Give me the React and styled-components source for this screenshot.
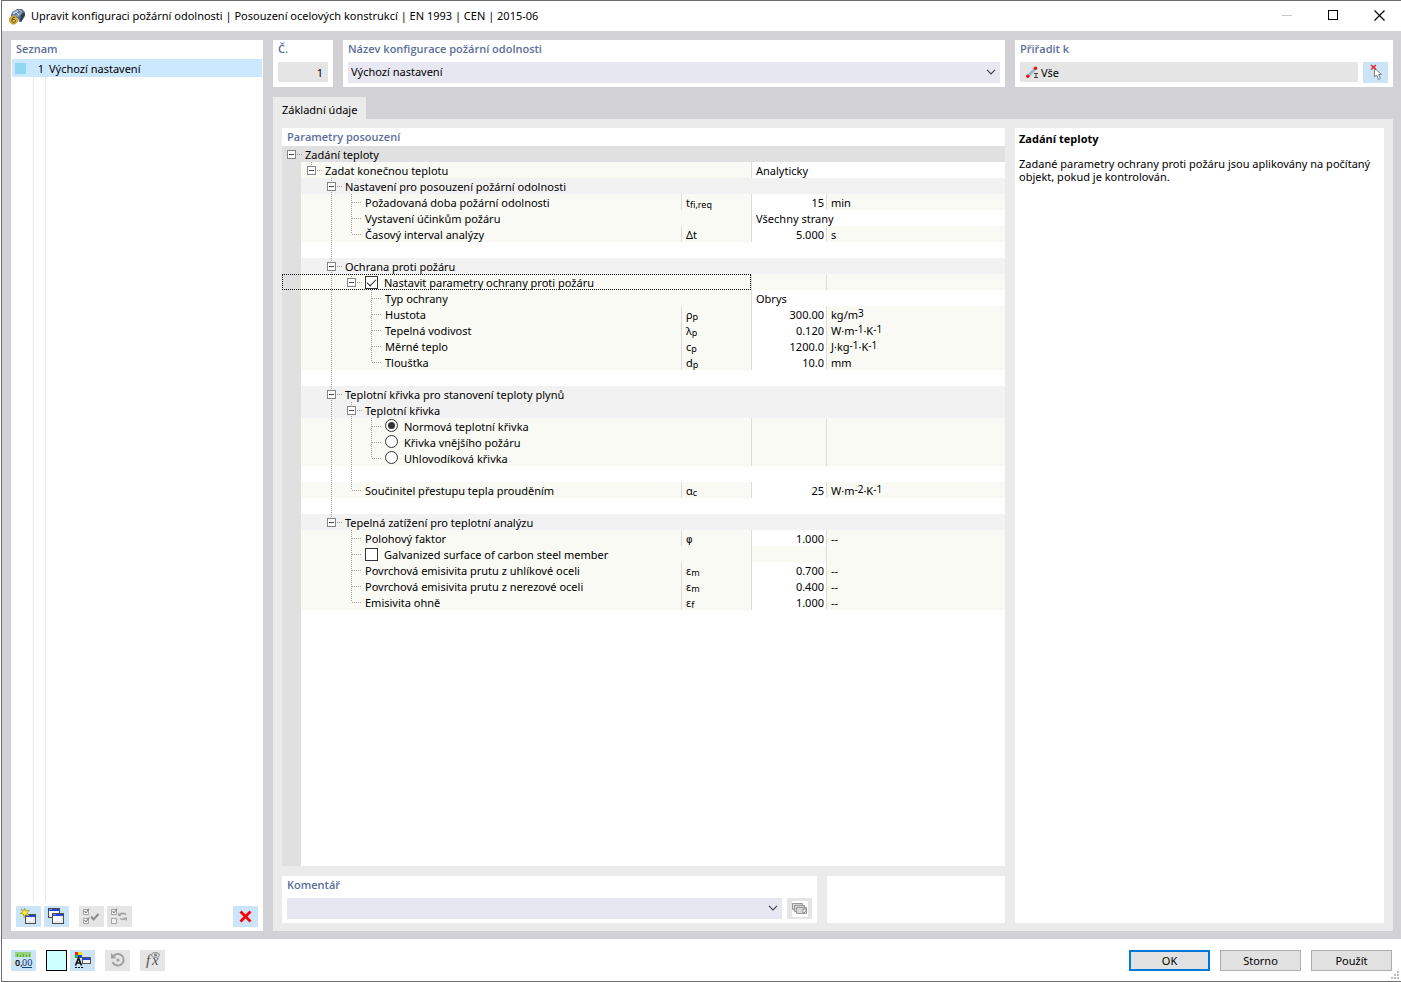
import React, { useState } from 'react'
import styled, { createGlobalStyle } from 'styled-components'

const GlobalStyle = createGlobalStyle`
	* {
		box-sizing: border-box;
	}

	body {
		margin: 0;
		color: #000;
		font-family: "Noto Sans", "Open Sans", sans-serif;
		font-size: 11px;
		line-height: 16px;
	}

	input, select, button {
		margin: 0;
		color: inherit;
		font: inherit;
	}
`;

const Dialog = styled.div`
	display: flex;
	flex-direction: column;
	min-height: 100vh;
	margin-left: 1px;
	border: solid #6d6d6d;
	border-width: 1px 0 1px 1px;
	background: #fff;
`;

const TitleBar = styled.header`
	display: flex;
	align-items: center;
	height: 30px;
	padding-left: 7px;
`;

const TitleText = styled.h1`
	flex: 1;
	margin: 0 0 0 5px;
	font-size: 11px;
	font-weight: normal;
	white-space: nowrap;
`;

const WindowButton = styled.button`
	display: flex;
	align-items: center;
	justify-content: center;
	width: 46px;
	height: 30px;
	padding: 0 0 2px 2px;
	border: 0;
	background: none;
`;

const Body = styled.main`
	display: flex;
	flex: 1;
	gap: 10px;
	padding: 9px 8px 8px 9px;
	background: #d2d1d6;
`;

const Panel = styled.section`
	display: flex;
	flex-direction: column;
	padding: ${({ $flush }) => ($flush ? '0' : '0 5px 4px')};
	flex: ${({ $flex }) => $flex || 'none'};
	width: ${({ $width }) => $width || 'auto'};
	min-width: 0;
	background: #fff;
`;

const Caption = styled.label`
	display: block;
	height: ${({ $compact }) => ($compact ? '18px' : '22px')};
	padding-left: ${({ $compact }) => ($compact ? '5px' : '0')};
	color: #5b6e99;
	font-family: "Open Sans", "Noto Sans", sans-serif;
	font-weight: 600;
	line-height: 18px;
`;

const ListRow = styled.div`
	display: grid;
	grid-template-columns: 22px 10px 1fr;
	align-items: center;
	height: 18px;
	background: #cce8ff;
`;

const ListGrid = styled.div`
	flex: 1;
	margin: 1px 1px 5px;
	background:
		linear-gradient(#e6e6e6, #e6e6e6) 21px 0 / 1px 100% no-repeat,
		linear-gradient(#e6e6e6, #e6e6e6) 33px 0 / 1px 100% no-repeat;
`;

const Swatch = styled.span`
	width: 11px;
	height: 11px;
	margin-left: 3px;
	background: #8fd7f3;
`;

const ListNumber = styled.span`
	padding-top: 2px;
	text-align: right;
`;

const ListName = styled.span`
	padding: 2px 0 0 5px;
`;

const Toolbar = styled.div`
	display: flex;
	gap: ${({ $gap }) => $gap || '3px'};
	margin-right: ${({ $push }) => ($push ? 'auto' : '0')};
`;

const ListFooter = styled.div`
	display: flex;
	gap: 10px;
	padding: 0 5px 4px;
`;

const IconButton = styled.button`
	display: flex;
	align-items: center;
	justify-content: center;
	flex: none;
	width: 25px;
	height: 21px;
	padding: 0;
	border: 0;
	background: ${({ disabled }) => (disabled ? '#e5e5e5' : '#cce4f7')};
`;

const ColorButton = styled(IconButton)`
	width: 21px;
	border: 1px solid #000;
	background: #ccffff;
`;

const Main = styled.div`
	display: flex;
	flex: 1;
	flex-direction: column;
	min-width: 0;
`;

const TopRow = styled.div`
	display: flex;
	gap: 10px;
	height: 47px;
`;

const Fields = styled.div`
	display: flex;
	gap: 5px;
`;

const NumberInput = styled.input`
	width: 50px;
	height: 20px;
	padding: 0 5px;
	border: 0;
	background: #e5e5e5;
	text-align: right;
`;

const SelectWrap = styled.div`
	position: relative;
	display: flex;
	flex: 1;
	height: 21px;
	background: #e7e7f2;

	svg {
		position: absolute;
		top: 7px;
		right: 4px;
		pointer-events: none;
	}
`;

const Select = styled.select`
	width: 100%;
	height: 20px;
	padding: 0 20px 0 3px;
	border: 0;
	background: none;
	appearance: none;
`;

const AssignField = styled.div`
	display: flex;
	align-items: center;
	flex: 1;
	height: 20px;
	padding-left: 6px;
	background: #e5e5e5;
`;

const AssignInput = styled.input`
	flex: 1;
	min-width: 0;
	padding: 2px 2px 0;
	border: 0;
	background: none;
`;

const Tab = styled.button`
	align-self: flex-start;
	height: 22px;
	margin-top: 10px;
	padding: 4px 9px 0;
	border: 0;
	background: #ebebeb;
	white-space: nowrap;
`;

const TabBody = styled.div`
	display: flex;
	flex: 1;
	gap: 10px;
	padding: 9px 9px 8px;
	background: #ebebeb;
`;

const Column = styled.div`
	display: flex;
	flex: 1;
	flex-direction: column;
	gap: 10px;
	min-width: 0;
`;

const TreeArea = styled.div`
	flex: 1;
	background: linear-gradient(to right, #e0e0e0 19px, #fff 19px);
`;

const TreeTable = styled.table`
	width: 100%;
	border-collapse: separate;
	border-spacing: 0;
	table-layout: fixed;
`;

const rowColors = { root: '#e0e0e0', group: '#f2f2f2', item: '#f9faf4', blank: '#fff' };

const Cell = styled.td`
	height: 16px;
	padding: 2px 4px 0;
	border-right: ${({ $line }) => ($line ? '1px solid #dcdcdc' : '0')};
	background: ${({ $kind }) => rowColors[$kind]};
	line-height: 14px;
	text-align: ${({ $right }) => ($right ? 'right' : 'left')};
	white-space: nowrap;

	sub, sup {
		font-size: 10px;
		line-height: 0;
	}

	sub {
		font-size: 9px;
		vertical-align: -1px;
	}

	sup {
		vertical-align: 2px;
	}
`;

const NumberCell = styled(Cell)`
	padding: 2px 2px 0 4px;
`;

const NameCell = styled(Cell)`
	padding: 0;
	background: ${({ $kind }) => `linear-gradient(to right, #e0e0e0 19px, ${rowColors[$kind]} 19px)`};
`;

const NameLine = styled.div`
	display: flex;
	align-items: center;
	height: 16px;
	outline: ${({ $focused }) => ($focused ? '1px dotted #000' : '0')};
	outline-offset: -1px;
	line-height: 16px;
`;

const Expander = styled.button`
	display: flex;
	padding: 0;
	border: 0;
	background: none;
`;

const NameText = styled.span`
	padding: 2px 0 0 3px;
`;

const OptionLabel = styled.label`
	display: flex;
	align-items: center;
	gap: 3px;
	padding-left: 3px;
`;

const CheckBox = styled.input`
	appearance: none;
	display: grid;
	place-items: center;
	width: 13px;
	height: 13px;
	border: 1px solid #333;
	background: #fff;

	&:checked::before {
		content: "";
		width: 8px;
		height: 4px;
		border: solid #222;
		border-width: 0 0 1px 1px;
		transform: translateY(-1px) rotate(-45deg);
	}
`;

const Radio = styled(CheckBox)`
	margin-bottom: 2px;
	border-radius: 50%;

	&:checked::before {
		width: 7px;
		height: 7px;
		border: 0;
		border-radius: 50%;
		background: #333;
		transform: none;
	}
`;

const LoopedGreek = styled.span`
	font-family: "DejaVu Sans", sans-serif;
	font-size: 10px;
	line-height: 0;
`;

const Info = styled.div`
	padding: 4px;
	line-height: 13px;

	h2 {
		margin: 0 0 12px;
		font-family: "Open Sans", "Noto Sans", sans-serif;
		font-size: 11px;
		font-weight: bold;
	}

	p {
		margin: 0;
	}
`;

const Footer = styled.footer`
	display: flex;
	align-items: center;
	gap: 10px;
	height: 42px;
	padding: 0 9px;
`;

const ActionButton = styled.button`
	width: 81px;
	height: 21px;
	padding: 2px 0 0;
	border: ${({ $primary }) => ($primary ? '2px solid #0078d7' : '1px solid #adadad')};
	background: #e1e1e1;
	line-height: 14px;
`;

const Grip = styled.svg`
	position: absolute;
	right: 2px;
	bottom: 3px;
`;

// one 20px tree slot: "|" line, "t" branch, "L" last branch, "o" box, "^" box with tail up, "+" box on a line
const guidePaths = {
	'|': 'M9.5 0V16',
	t: 'M9.5 0V16M10 8.5H20',
	L: 'M9.5 0V8M9.5 8.5H20',
	o: 'M15 8.5H20',
	'^': 'M9.5 0V4M15 8.5H20',
	'+': 'M9.5 0V4M9.5 14V16M15 8.5H20'
};

const Guide = ({ type }) => {
	const svg = (
		<svg width="20" height="16" shapeRendering="crispEdges" fill="none">
			<path d={guidePaths[type] || ''} stroke="#a0a0a0" strokeDasharray="1 1" />
			{
				'o^+'.includes(type) ?
					<g>
						<rect x="5.5" y="4.5" width="8" height="8" fill="#fff" stroke="#848484" />
						<path d="M7 8.5H12" stroke="#444" />
					</g>
				: null
			}
		</svg>
	);
	return 'o^+'.includes(type) ? <Expander type="button" aria-label="Sbalit">{svg}</Expander> : svg
}

const ChevronDown = () => (
	<svg width="10" height="6" fill="none">
		<path d="M1 .8L5 4.8L9 .8" stroke="#444" strokeWidth="1.2" />
	</svg>
)

const WindowShape = ({ x, y, w, h }) => (
	<g>
		<rect x={x + 0.5} y={y + 0.5} width={w - 1} height={h - 1} fill="#e9e9e9" stroke="#4d4d4d" />
		<rect x={x + 1} y={y + 3} width={w - 4} height={h - 6} fill="#fafafa" />
		<rect x={x + 1} y={y + 1} width={w - 2} height="2" fill="#2346d8" />
		<rect x={x + 1} y={y + 1} width="3" height="1" fill="#6f8cf0" />
	</g>
)

const AppIcon = () => (
	<svg width="17" height="17" viewBox="0 0 17 17">
		<path d="M2 7L3 4L8 1L13 1L16 4L16 8L12 14L10 14L9 10L5 12L2 10Z" fill="#5f738f" />
		<path d="M3 5L8 2L10 3L5 6.500Z" fill="#b6c6dc" />
		<path d="M6 8L11 4L13 5L9 9Z" fill="#8ba1c0" />
		<path d="M12 7L15 4L16 7L12 14L11 12Z" fill="#2e3d55" />
		<path d="M4 7L7 9M7 4L10 7M10 2L13 4" stroke="#dfe7f2" strokeWidth=".8" />
		<circle cx="4.500" cy="12" r="4.200" fill="#deb33c" stroke="#a88325" strokeWidth=".6" />
		<path d="M6 9.500H4L3 11V13.500L4 14.500H5.500L6.500 13.500V12.500L5.500 11.500H3.500" fill="none" stroke="#5c4a1c" />
	</svg>
)

const NewIcon = () => (
	<svg width="17" height="17" viewBox="0 0 17 17">
		<WindowShape x={5} y={6} w={11} h={10} />
		<path d="M4.500 0L5.500 3L9.500 2L7 4.700L9 8L5.700 6.500L4 9.500L3.400 6L0 5.500L3 4L1 1L4 2.700Z" fill="#fff02a" stroke="#94881e" strokeWidth=".6" />
	</svg>
)

const CopyIcon = () => (
	<svg width="17" height="17" viewBox="0 0 17 17">
		<WindowShape x={0} y={0} w={12} h={10} />
		<WindowShape x={4} y={5} w={12} h={11} />
	</svg>
)

const CheckAllIcon = ({ swap }) => (
	<svg width="17" height="17" viewBox="0 0 17 17" fill="none" stroke="#a3a3a3">
		<path d="M.5 1.500H5.500V6.500H.5Z" fill="#f2f2f2" />
		<path d="M.5 10.500H5.500V15.500H.5Z" fill="#f2f2f2" />
		<path d="M1.500 3L3 5L6 .5" stroke="#777" />
		{
			swap ?
				<g>
					<path d="M8 7Q11 4 15 6.500M15 10Q12 12.500 9 10.500" strokeWidth="1.500" />
					<path d="M7 4.500V8H10.500ZM16 13V9.500H12.500Z" fill="#a3a3a3" stroke="none" />
				</g>
			: <g stroke="#777">
				<path d="M1.500 12L3 14L6 9.500" />
				<path d="M8 8.500L10.500 11.500L15.500 6" stroke="#8c8c8c" strokeWidth="2" />
			</g>
		}
	</svg>
)

const DeleteIcon = () => (
	<svg width="13" height="13" viewBox="0 0 13 13">
		<path d="M1.500 1.500L11.500 11.500M11.500 1.500L1.500 11.500" stroke="#f00" strokeWidth="2.800" />
	</svg>
)

const UnitsIcon = () => (
	<svg width="19" height="17" viewBox="0 0 19 17">
		<rect x="1" y="0" width="16" height="5" fill="#94d57c" />
		<path d="M3.500 2V5M6.500 3V5M9.500 2V5M12.500 3V5M15.500 2V5" stroke="#579d45" />
		<text x="1" y="14" fontSize="9" fontFamily="Noto Sans" fontWeight="600" fill="#111">0,</text>
		<text x="8" y="14" fontSize="9" fontFamily="Noto Sans" fontWeight="500" fill="#174785">00</text>
		<path d="M8 15.500H18" stroke="#174785" />
	</svg>
)

const DisplayIcon = () => (
	<svg width="18" height="17" viewBox="0 0 18 17">
		<rect x="1" y="0" width="3" height="3" fill="#e22" />
		<rect x="4" y="0" width="4" height="3" fill="#fd0" />
		<rect x="1" y="3" width="3" height="3" fill="#1b3" />
		<rect x="4" y="3" width="4" height="3" fill="#24e" />
		<path d="M1.500 13.500L4.500 6L7.500 13.500M3 11H6" fill="none" stroke="#111" strokeWidth="1.600" />
		<path d="M1 15.500H9" stroke="#111" strokeDasharray="2 1" />
		<rect x="8.500" y="5.500" width="8" height="6" fill="#f4f4f4" stroke="#555" />
		<rect x="9" y="6" width="7" height="2" fill="#2346d8" />
	</svg>
)

const ResetIcon = () => (
	<svg width="16" height="16" viewBox="0 0 16 16" fill="none" stroke="#9f9f9f" strokeWidth="2">
		<path d="M3 4.500A5.800 5.800 0 1 1 2.500 10" />
		<path d="M1 1V6.500H6.500Z" fill="#9f9f9f" stroke="none" />
		<circle cx="8" cy="8" r="1.600" fill="#9f9f9f" stroke="none" />
	</svg>
)

const FormulaIcon = () => (
	<svg width="18" height="18" viewBox="0 0 18 18">
		<text x="2" y="14" fontSize="15" fontStyle="italic" fontFamily="Liberation Serif" fill="#555">f</text>
		<text x="8" y="14" fontSize="15" fontStyle="italic" fontFamily="Liberation Serif" fill="#555">x</text>
		<ellipse cx="11.500" cy="4" rx="4" ry="2.500" fill="#e5e5e5" stroke="#888" />
		<circle cx="11.500" cy="4" r="1.400" fill="#777" />
	</svg>
)

const MemberIcon = () => (
	<svg width="13" height="13" viewBox="0 0 13 13">
		<path d="M2 10L10 2" stroke="#9fb6d0" strokeWidth="3" />
		<circle cx="1.800" cy="10.200" r="1.700" fill="#e11" />
		<circle cx="9.500" cy="2.200" r="1.700" fill="#e11" />
		<path d="M8 7.500H12M8 11.500H12M10 7V12" stroke="#444" />
	</svg>
)

const PickIcon = () => (
	<svg width="17" height="17" viewBox="0 0 17 17">
		<path d="M7.500 4L7.500 13L9.500 11L11.500 15.500L13.500 14.500L11.500 10.500H14.500Z" fill="#fff" stroke="#808080" />
		<path d="M4 1L9 5.500M9 1L4 5.500" stroke="#e8202a" strokeWidth="1.500" />
	</svg>
)

const CommentsIcon = () => (
	<svg width="16" height="16" viewBox="0 0 16 16">
		<rect width="16" height="16" fill="#fff" />
		<g fill="#d6d6d6" stroke="#999">
			<path d="M.5 2.500H10.500V8.500H.5Z" />
			<path d="M2.500 4.500H12.500V10.500H2.500Z" />
			<path d="M4.500 6.500H14.500V12.500H4.500Z" />
		</g>
		<path d="M11 8H14V10L12 12H11Z" fill="#fff" stroke="#888" />
	</svg>
)

const rows = [
	{ tree: 'o', name: 'Zadání teploty', kind: 'root' },
	{ tree: ' ^', name: 'Zadat konečnou teplotu', choice: 'Analyticky' },
	{ tree: '  +', name: 'Nastavení pro posouzení požární odolnosti', kind: 'group' },
	{ tree: '  |t', name: 'Požadovaná doba požární odolnosti', symbol: <>t<sub>fi,req</sub></>, value: '15', unit: 'min' },
	{ tree: '  |t', name: 'Vystavení účinkům požáru', choice: 'Všechny strany' },
	{ tree: '  |L', name: 'Časový interval analýzy', symbol: 'Δt', value: '5.000', unit: 's' },
	{ tree: '  |', kind: 'blank' },
	{ tree: '  +', name: 'Ochrana proti požáru', kind: 'group' },
	{ tree: '  |^', name: 'Nastavit parametry ochrany proti požáru', input: 'checkbox', id: 'protection', focused: true },
	{ tree: '  | t', name: 'Typ ochrany', choice: 'Obrys' },
	{ tree: '  | t', name: 'Hustota', symbol: <>ρ<sub>p</sub></>, value: '300.00', unit: <>kg/m<sup>3</sup></> },
	{ tree: '  | t', name: 'Tepelná vodivost', symbol: <>λ<sub>p</sub></>, value: '0.120', unit: <>W·m<sup>-1</sup>·K<sup>-1</sup></> },
	{ tree: '  | t', name: 'Měrné teplo', symbol: <>c<sub>p</sub></>, value: '1200.0', unit: <>J·kg<sup>-1</sup>·K<sup>-1</sup></> },
	{ tree: '  | L', name: 'Tloušťka', symbol: <>d<sub>p</sub></>, value: '10.0', unit: 'mm' },
	{ tree: '  |', kind: 'blank' },
	{ tree: '  +', name: 'Teplotní křivka pro stanovení teploty plynů', kind: 'group' },
	{ tree: '  |+', name: 'Teplotní křivka', kind: 'group' },
	{ tree: '  ||t', name: 'Normová teplotní křivka', input: 'radio', id: 'standard' },
	{ tree: '  ||t', name: 'Křivka vnějšího požáru', input: 'radio', id: 'external' },
	{ tree: '  ||L', name: 'Uhlovodíková křivka', input: 'radio', id: 'hydrocarbon' },
	{ tree: '  ||', kind: 'blank' },
	{ tree: '  |L', name: 'Součinitel přestupu tepla prouděním', symbol: <>α<sub>c</sub></>, value: '25', unit: <>W·m<sup>-2</sup>·K<sup>-1</sup></> },
	{ tree: '  |', kind: 'blank' },
	{ tree: '  ^', name: 'Tepelná zatížení pro teplotní analýzu', kind: 'group' },
	{ tree: '   t', name: 'Polohový faktor', symbol: <LoopedGreek>φ</LoopedGreek>, value: '1.000', unit: '--' },
	{ tree: '   t', name: 'Galvanized surface of carbon steel member', input: 'checkbox', id: 'galvanized' },
	{ tree: '   t', name: 'Povrchová emisivita prutu z uhlíkové oceli', symbol: <>ε<sub>m</sub></>, value: '0.700', unit: '--' },
	{ tree: '   t', name: 'Povrchová emisivita prutu z nerezové oceli', symbol: <>ε<sub>m</sub></>, value: '0.400', unit: '--' },
	{ tree: '   L', name: 'Emisivita ohně', symbol: <>ε<sub>f</sub></>, value: '1.000', unit: '--' }
];

const ParameterRow = ({ row, checks, setChecks, curve, setCurve }) => {
	const kind = row.kind || 'item'
	const wide = kind !== 'item'

	return (
		<tr>
			<NameCell $kind={kind} $line={!wide} colSpan={wide ? 4 : row.symbol ? 1 : 2}>
				<NameLine $focused={row.focused}>
					{row.tree.split('').map((type, i) => (
						<Guide key={i} type={type} />
					))}
					{
						row.input === 'checkbox' ?
							<OptionLabel>
								<CheckBox type="checkbox" checked={checks[row.id]} onChange={e => setChecks({ ...checks, [row.id]: e.target.checked })} />
								<NameText>{row.name}</NameText>
							</OptionLabel>
						: row.input === 'radio' ?
							<OptionLabel>
								<Radio type="radio" name="curve" checked={curve === row.id} onChange={() => setCurve(row.id)} />
								<NameText>{row.name}</NameText>
							</OptionLabel>
						: row.name ? <NameText>{row.name}</NameText> : null
					}
				</NameLine>
			</NameCell>
			{row.symbol ? <Cell $kind={kind} $line>{row.symbol}</Cell> : null}
			{row.choice ? <Cell $kind="blank" colSpan={2}>{row.choice}</Cell> : null}
			{
				!wide && !row.choice ?
					<>
						<NumberCell $kind={row.value ? 'blank' : kind} $line $right>{row.value}</NumberCell>
						<Cell $kind={kind}>{row.unit}</Cell>
					</>
				: null
			}
		</tr>
	)
}

const App = () => {
	const [checks, setChecks] = useState({ protection: true, galvanized: false })
	const [curve, setCurve] = useState('standard')

	return (
		<Dialog>
			<GlobalStyle />
			<TitleBar>
				<AppIcon />
				<TitleText>Upravit konfiguraci požární odolnosti | Posouzení ocelových konstrukcí | EN 1993 | CEN | 2015-06</TitleText>
				<WindowButton type="button" aria-label="Minimalizovat" disabled>
					<svg width="11" height="11"><path d="M0 5.5H10" stroke="#c8c8c8" /></svg>
				</WindowButton>
				<WindowButton type="button" aria-label="Maximalizovat">
					<svg width="11" height="11"><rect x=".5" y=".5" width="9" height="9" fill="none" stroke="#000" /></svg>
				</WindowButton>
				<WindowButton type="button" aria-label="Zavřít">
					<svg width="11" height="11"><path d="M.5 .5L10.500 10.500M10.500 .5L.5 10.500" stroke="#000" strokeWidth="1.200" /></svg>
				</WindowButton>
			</TitleBar>
			<Body>
				<Panel $flush $width="252px">
					<Caption as="div" $compact>Seznam</Caption>
					<ListGrid>
						<ListRow>
							<Swatch />
							<ListNumber>1</ListNumber>
							<ListName>Výchozí nastavení</ListName>
						</ListRow>
					</ListGrid>
					<ListFooter>
						<Toolbar>
							<IconButton type="button" aria-label="Nový"><NewIcon /></IconButton>
							<IconButton type="button" aria-label="Kopírovat"><CopyIcon /></IconButton>
						</Toolbar>
						<Toolbar $push>
							<IconButton type="button" aria-label="Vybrat vše" disabled><CheckAllIcon /></IconButton>
							<IconButton type="button" aria-label="Obrátit výběr" disabled><CheckAllIcon swap /></IconButton>
						</Toolbar>
						<IconButton type="button" aria-label="Smazat"><DeleteIcon /></IconButton>
					</ListFooter>
				</Panel>
				<Main>
					<TopRow>
						<Panel $width="60px">
							<Caption htmlFor="number">Č.</Caption>
							<NumberInput id="number" value="1" readOnly />
						</Panel>
						<Panel $flex="1">
							<Caption htmlFor="name">Název konfigurace požární odolnosti</Caption>
							<SelectWrap>
								<Select id="name"><option>Výchozí nastavení</option></Select>
								<ChevronDown />
							</SelectWrap>
						</Panel>
						<Panel $width="378px">
							<Caption htmlFor="assign">Přiřadit k</Caption>
							<Fields>
								<AssignField>
									<MemberIcon />
									<AssignInput id="assign" value="Vše" readOnly />
								</AssignField>
								<IconButton type="button" aria-label="Vybrat objekty"><PickIcon /></IconButton>
							</Fields>
						</Panel>
					</TopRow>
					<Tab type="button">Základní údaje</Tab>
					<TabBody>
						<Column>
							<Panel $flush $flex="1">
								<Caption as="div" $compact>Parametry posouzení</Caption>
								<TreeArea>
									<TreeTable>
										<colgroup>
											<col width="400" />
											<col width="70" />
											<col width="75" />
											<col />
										</colgroup>
										<tbody>
											{rows.map((row, i) => (
												<ParameterRow key={i} row={row} checks={checks} setChecks={setChecks} curve={curve} setCurve={setCurve} />
											))}
										</tbody>
									</TreeTable>
								</TreeArea>
							</Panel>
							<TopRow>
								<Panel $flex="1">
									<Caption htmlFor="comment">Komentář</Caption>
									<Fields>
										<SelectWrap>
											<Select id="comment" defaultValue=""><option value=""></option></Select>
											<ChevronDown />
										</SelectWrap>
										<IconButton type="button" aria-label="Vybrat komentář" disabled><CommentsIcon /></IconButton>
									</Fields>
								</Panel>
								<Panel $width="178px" />
							</TopRow>
						</Column>
						<Panel $flush $width="369px">
							<Info>
								<h2>Zadání teploty</h2>
								<p>Zadané parametry ochrany proti požáru jsou aplikovány na počítaný objekt, pokud je kontrolován.</p>
							</Info>
						</Panel>
					</TabBody>
				</Main>
			</Body>
			<Footer>
				<IconButton type="button" aria-label="Jednotky"><UnitsIcon /></IconButton>
				<Toolbar>
					<ColorButton type="button" aria-label="Barva" />
					<IconButton type="button" aria-label="Zobrazení"><DisplayIcon /></IconButton>
				</Toolbar>
				<IconButton type="button" aria-label="Obnovit" disabled><ResetIcon /></IconButton>
				<Toolbar $push>
					<IconButton type="button" aria-label="Vzorec" disabled><FormulaIcon /></IconButton>
				</Toolbar>
				<ActionButton type="button" $primary>OK</ActionButton>
				<ActionButton type="button">Storno</ActionButton>
				<ActionButton type="button">Použít</ActionButton>
				<Grip width="8" height="8" fill="#bcbcbc">
					<path d="M6 0h2v2h-2zM3 3h2v2h-2zM6 3h2v2h-2zM0 6h2v2h-2zM3 6h2v2h-2zM6 6h2v2h-2z" />
				</Grip>
			</Footer>
		</Dialog>
	)
}

export default App
